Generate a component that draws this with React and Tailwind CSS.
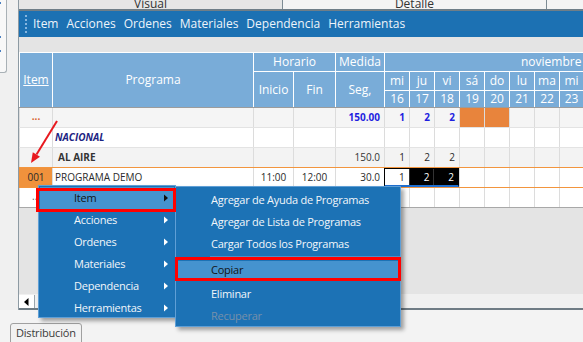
import React from "react";

const W = ["w-[33px]", "w-[201px]", "w-[40px]", "w-[42px]", "w-[49px]", "w-[25px]", "w-[25px]", "w-[25px]", "w-[25px]", "w-[25px]", "w-[25px]", "w-[25px]", "w-[25px]"];

function HCell({ className = "", children }) {
  return (
    <div className={"border-l border-t border-white bg-[#79acd8] text-white flex items-center justify-center " + className}>
      {children}
    </div>
  );
}

function Toolbar() {
  const items = ["Item", "Acciones", "Ordenes", "Materiales", "Dependencia", "Herramientas"];
  return (
    <div className="h-[26px] bg-[#1c71b3] flex items-center">
      <div className="ml-[6px] mr-[6px] flex flex-col gap-[2px]">
        {[0, 1, 2, 3, 4].map((i) => (
          <div key={i} className="w-[2px] h-[2px] bg-[#86b6e0]" />
        ))}
      </div>
      <div className="flex gap-[8px] text-[12px] text-[#eef4fa]">
        {items.map((t) => (
          <span key={t}>{t}</span>
        ))}
      </div>
    </div>
  );
}

function Header() {
  const days = ["mi", "ju", "vi", "sá", "do", "lu", "ma", "mi"];
  const dates = ["16", "17", "18", "19", "20", "21", "22", "23"];
  return (
    <div className="grid grid-cols-[33px_201px_40px_42px_49px_25px_25px_25px_25px_25px_25px_25px_24px] grid-rows-[19px_19px_17px] border-b border-[#9c9c9c] text-[12px] bg-[#79acd8]">
      <HCell className="row-span-3 col-start-1 row-start-1">
        <span className="underline">Item</span>
      </HCell>
      <HCell className="row-span-3 col-start-2 row-start-1">Programa</HCell>
      <HCell className="col-span-2 col-start-3 row-start-1">Horario</HCell>
      <HCell className="col-start-5 row-start-1">Medida</HCell>
      <HCell className="col-span-8 col-start-6 row-start-1 !justify-start pl-[136px] whitespace-nowrap">noviembre</HCell>
      <HCell className="row-span-2 col-start-3 row-start-2">Inicio</HCell>
      <HCell className="row-span-2 col-start-4 row-start-2">Fin</HCell>
      <HCell className="row-span-2 col-start-5 row-start-2">Seg,</HCell>
      {days.map((d, i) => (
        <HCell key={"d" + i} className="row-start-2">{d}</HCell>
      ))}
      {dates.map((d, i) => (
        <HCell key={"t" + i} className="row-start-3">{d}</HCell>
      ))}
    </div>
  );
}

function Cell({ i, className = "", children }) {
  return (
    <div className={W[i] + " shrink-0 h-full border-l border-[#dcdcdc] flex items-center " + className}>
      {children}
    </div>
  );
}

function EmptyDays({ from = 5, orange = [] }) {
  const out = [];
  for (let i = from; i < 13; i++) {
    out.push(<Cell key={i} i={i} className={orange.includes(i) ? "bg-[#e8843c]" : ""} />);
  }
  return out;
}

function Body() {
  return (
    <div className="text-[10px] text-[#2a2a2a]">
      {/* row 1 */}
      <div className="flex h-[20px] bg-[#f5f5f5] border-b border-[#e3e3e3]">
        <Cell i={0} className="justify-center text-[#d8602a] font-bold pb-[2px]">...</Cell>
        <Cell i={1} />
        <Cell i={2} />
        <Cell i={3} />
        <Cell i={4} className="justify-end pr-[4px] text-[#1f1fe0] font-bold">150.00</Cell>
        <Cell i={5} className="justify-end pr-[4px] text-[#1f1fe0] font-bold">1</Cell>
        <Cell i={6} className="justify-end pr-[4px] text-[#1f1fe0] font-bold">2</Cell>
        <Cell i={7} className="justify-end pr-[4px] text-[#1f1fe0] font-bold">2</Cell>
        <EmptyDays from={8} orange={[8, 9]} />
      </div>
      {/* row 2 */}
      <div className="flex h-[20px] bg-white border-b border-[#e3e3e3]">
        <Cell i={0} />
        <Cell i={1} className="pl-[2px] italic font-bold text-[#1c2382]">NACIONAL</Cell>
        <Cell i={2} />
        <Cell i={3} />
        <Cell i={4} />
        <EmptyDays from={5} />
      </div>
      {/* row 3 */}
      <div className="flex h-[19px] bg-[#f3f3f3]">
        <Cell i={0} />
        <Cell i={1} className="pl-[5px] font-bold text-[#333]">AL AIRE</Cell>
        <Cell i={2} />
        <Cell i={3} />
        <Cell i={4} className="justify-end pr-[4px] text-[#333]">150.0</Cell>
        <Cell i={5} className="justify-end pr-[4px]">1</Cell>
        <Cell i={6} className="justify-end pr-[4px]">2</Cell>
        <Cell i={7} className="justify-end pr-[4px]">2</Cell>
        <EmptyDays from={8} />
      </div>
      {/* row 4 */}
      <div className="flex h-[21px] bg-white border-y border-[#f2953e]">
        <Cell i={0} className="justify-center bg-[#f0923c] !border-[#f0923c]">001</Cell>
        <Cell i={1} className="pl-[2px]">PROGRAMA DEMO</Cell>
        <Cell i={2} className="justify-center">11:00</Cell>
        <Cell i={3} className="justify-center">12:00</Cell>
        <Cell i={4} className="justify-end pr-[4px]">30.0</Cell>
        <div className="flex w-[75px] shrink-0 h-full border border-black border-b-2 border-b-[#1f6fd0]">
          <div className="w-[24px] bg-white flex items-center justify-end pr-[4px]">1</div>
          <div className="w-[25px] bg-black border-l border-[#333] text-white flex items-center justify-end pr-[4px]">2</div>
          <div className="w-[25px] bg-black border-l border-[#333] text-white flex items-center justify-end pr-[4px]">2</div>
        </div>
        <EmptyDays from={8} />
      </div>
      {/* row 5 */}
      <div className="flex h-[20px] bg-white border-b border-[#a8a8a8]">
        <Cell i={0} className="justify-center text-[#555] pb-[2px]">...</Cell>
        <Cell i={1} />
        <Cell i={2} />
        <Cell i={3} />
        <Cell i={4} />
        <EmptyDays from={5} />
      </div>
    </div>
  );
}

function Arrow({ color = "white" }) {
  return (
    <svg width="6" height="8" viewBox="0 0 6 8">
      <path d="M1 0.5 L5 4 L1 7.5 Z" fill={color} />
    </svg>
  );
}

function MainMenu() {
  const items = ["Acciones", "Ordenes", "Materiales", "Dependencia", "Herramientas"];
  return (
    <div className="absolute left-[38px] top-[185px] w-[138px] h-[133px] bg-[#1c72b5] border border-[#5f9fd6] shadow-[3px_3px_4px_rgba(0,0,0,0.35)] pt-[1px] text-[11px] tracking-[-0.25px]">
      <div className="h-[22px] mx-[1px] bg-[#4593cf] flex items-center justify-between pl-[34px] pr-[5px] text-[#141414]">
        <span>Item</span>
        <Arrow color="#111" />
      </div>
      {items.map((t) => (
        <div key={t} className="h-[22px] flex items-center justify-between pl-[35px] pr-[6px] text-[#f2f6fa]">
          <span>{t}</span>
          <Arrow />
        </div>
      ))}
    </div>
  );
}

function SubMenu() {
  return (
    <div className="absolute left-[175px] top-[186px] w-[226px] h-[141px] bg-[#1c72b5] border border-[#5f9fd6] shadow-[3px_3px_4px_rgba(0,0,0,0.35)] pt-[2px] text-[11px] tracking-[-0.25px] text-[#f2f6fa]">
      <div className="h-[22px] flex items-center pl-[35px]">Agregar de Ayuda de Programas</div>
      <div className="h-[22px] flex items-center pl-[35px]">Agregar de Lista de Programas</div>
      <div className="h-[22px] flex items-center pl-[35px]">Cargar Todos los Programas</div>
      <div className="h-[4px] pt-[1px] pl-[34px]">
        <div className="border-t border-[#4f8dc6]" />
      </div>
      <div className="h-[22px] flex items-center">
        <div className="h-[19px] w-full mx-[2px] bg-[#4593cf] flex items-center pl-[33px] text-[#141414]">Copiar</div>
      </div>
      <div className="h-[2px]" />
      <div className="h-[22px] flex items-center pl-[35px]">Eliminar</div>
      <div className="h-[22px] flex items-center pl-[35px] text-[#7690aa]">Recuperar</div>
    </div>
  );
}

export default function App() {
  return (
    <div className="relative w-[583px] h-[342px] overflow-hidden bg-[#f3f3f3] font-['Open_Sans',sans-serif]">
      <div className="flex h-[310px]">
        {/* left strip */}
        <div className="w-[18px] shrink-0 bg-[#f0f0f0] flex flex-col">
          <div className="w-[7px] h-[73px] bg-[#f8f8f8] border-r border-b border-[#a9b1b6] rounded-br-[3px] flex flex-col gap-[12px] pt-[2px]">
            <div className="w-[1px] h-[2px] bg-[#4a7fc0]" />
            <div className="w-[1px] h-[2px] bg-[#4a7fc0] mt-[20px]" />
            <div className="w-[1px] h-[2px] bg-[#4a7fc0]" />
          </div>
        </div>
        {/* main */}
        <div className="w-[565px] shrink-0 border-l border-[#8d9aa3] flex flex-col overflow-hidden">
          <div className="h-[11px] flex border-b-2 border-[#6f7e88] text-[12px] text-[#333]">
            <div className="w-[264px] shrink-0 bg-[#e6e6e6] border-r border-[#7d8b94] overflow-hidden flex justify-center">
              <div className="h-[9px] overflow-hidden flex items-end">
                <span className="leading-[14px] mb-[-2px]">Visual</span>
              </div>
            </div>
            <div className="w-[264px] shrink-0 bg-[#f4f4f4] border-r border-[#7d8b94] overflow-hidden flex justify-center">
              <div className="h-[9px] overflow-hidden flex items-end">
                <span className="leading-[14px] mb-[-2px]">Detalle</span>
              </div>
            </div>
            <div className="flex-1 bg-[#f4f4f4]" />
          </div>
          <Toolbar />
          <div className="h-[15px] bg-[#e4e4e4]" />
          <Header />
          <Body />
          <div className="flex-1 bg-[#e4e4e4]" />
          <div className="h-[14px] bg-[#f0f0f0] flex items-end">
            <div className="w-[16px] h-[13px] bg-white border-r border-[#9aa5ac] flex items-center justify-center">
              <svg width="5" height="8" viewBox="0 0 5 8">
                <path d="M4.5 0 L0 4 L4.5 8 Z" fill="#000" />
              </svg>
            </div>
          </div>
          <div className="h-[2px] bg-[#6e7b84]" />
        </div>
      </div>
      <div className="h-[32px] pt-[13px] pl-[10px] flex">
        <div className="h-[20px] px-[5px] border border-[#a0a0a0] rounded-t-[3px] bg-[#f2f2f2] text-[11px] tracking-[-0.2px] text-[#3a3a3a] leading-[18px]">
          Distribución
        </div>
      </div>

      <MainMenu />
      <SubMenu />
      {/* red annotations */}
      <div className="absolute left-[36px] top-[188px] w-[140px] h-[24px] border-[3px] border-[#ff0000]" />
      <div className="absolute left-[175px] top-[257px] w-[226px] h-[24px] border-[3px] border-[#ff0000]" />
      <svg className="absolute left-0 top-0 pointer-events-none" width="583" height="342">
        <line x1="57" y1="121" x2="36.5" y2="154.5" stroke="#e8191f" strokeWidth="2" />
        <polygon points="31,163 40,156.8 32.8,152.3" fill="#e8191f" />
      </svg>
    </div>
  );
}
